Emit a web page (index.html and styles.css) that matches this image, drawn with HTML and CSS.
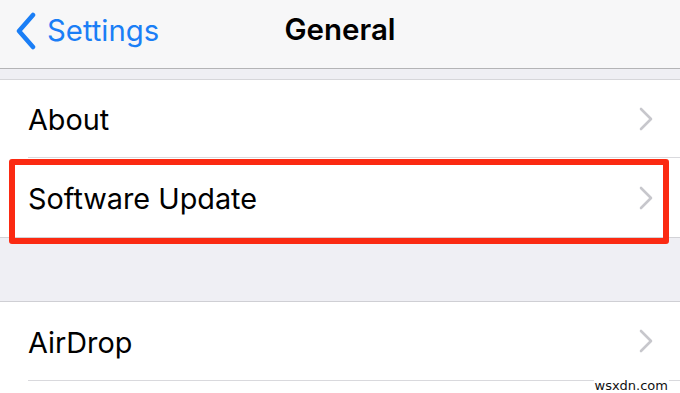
FILE: index.html
```html
<!DOCTYPE html>
<html>
<head>
<meta charset="utf-8">
<link rel="stylesheet" href="styles.css">
</head>
<body>
<div class="screen">
  <header class="nav">
    <div class="back">
      <svg class="back-chev" width="22" height="38" viewBox="0 0 22 38"><path d="M18 3 L4 19 L18 35" fill="none" stroke="#1a7ef6" stroke-width="4.5" stroke-linecap="round" stroke-linejoin="round"/></svg>
      <span class="back-label">Settings</span>
    </div>
    <div class="title">General</div>
  </header>
  <div class="spacer-top"></div>
  <div class="group">
    <div class="row"><div class="row-inner"><span class="label">About</span><svg class="chev" width="14" height="24" viewBox="0 0 14 24"><path d="M2 2 L12 12 L2 22" fill="none" stroke="#c7c7cc" stroke-width="2.6" stroke-linecap="round" stroke-linejoin="round"/></svg></div></div>
    <div class="row row-last highlighted"><div class="row-inner"><span class="label">Software Update</span><svg class="chev" width="14" height="24" viewBox="0 0 14 24"><path d="M2 2 L12 12 L2 22" fill="none" stroke="#c7c7cc" stroke-width="2.6" stroke-linecap="round" stroke-linejoin="round"/></svg></div><div class="highlight"></div></div>
  </div>
  <div class="spacer"></div>
  <div class="group group-2">
    <div class="row"><div class="row-inner"><span class="label">AirDrop</span><svg class="chev" width="14" height="24" viewBox="0 0 14 24"><path d="M2 2 L12 12 L2 22" fill="none" stroke="#c7c7cc" stroke-width="2.6" stroke-linecap="round" stroke-linejoin="round"/></svg></div></div>
  </div>
  <div class="watermark">wsxdn.com</div>
</div>
</body>
</html>
```
FILE: styles.css
```css
html, body {
  margin: 0;
  padding: 0;
  background: #ffffff;
}
.screen {
  width: 680px;
  height: 393px;
  overflow: hidden;
  position: relative;
  font-family: Inter, "Liberation Sans", sans-serif;
  color: #000;
}
.nav {
  height: 68px;
  background: #f7f7f8;
  border-bottom: 1px solid #b4b4b6;
  position: relative;
  display: flex;
  align-items: center;
}
.back {
  display: flex;
  align-items: center;
  padding-left: 15px;
  gap: 10px;
  margin-top: -6px;
}
.back-label {
  font-size: 29.3px;
  color: #1a7ef6;
  margin-top: -2px;
}
.title {
  position: absolute;
  left: 0;
  right: 0;
  top: 11px;
  text-align: center;
  font-size: 29.5px;
  font-weight: 600;
  line-height: 36px;
}
.spacer-top {
  height: 10px;
  background: #efeff4;
  border-bottom: 1px solid #d6d6da;
}
.group {
  background: #fff;
}
.row {
  padding-left: 28px;
  position: relative;
}
.row-inner {
  height: 77px;
  display: flex;
  align-items: center;
  justify-content: space-between;
  padding-right: 27px;
  border-bottom: 1px solid #d9d9dd;
}
.row-last .row-inner {
  border-bottom: none;
  height: 79px;
}
.row-last {
  border-bottom: 1px solid #d2d2d6;
}
.label {
  font-size: 28.8px;
  margin-top: 2px;
}
.chev {
  display: block;
}
.spacer {
  height: 63px;
  background: #efeff4;
  border-bottom: 1px solid #cfcfd4;
}
.group-2 .row-inner {
  height: 78px;
}
.highlight {
  position: absolute;
  left: 9px;
  right: 11px;
  top: 1px;
  bottom: -7px;
  border: 6px solid #fb2a12;
  border-radius: 3px;
  pointer-events: none;
}
.watermark {
  position: absolute;
  right: 11px;
  bottom: 0px;
  font-family: "DejaVu Sans", sans-serif;
  font-size: 13px;
  line-height: 14px;
  color: #111;
  background: #fff;
  padding: 0 1px;
}
```
